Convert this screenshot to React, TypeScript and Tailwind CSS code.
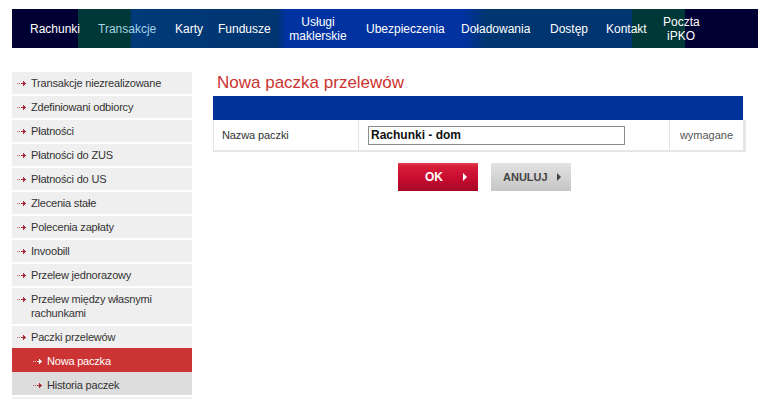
import React from "react";

const Arrow = ({ color = "#a8283c" }: { color?: string }) => (
  <svg width="9" height="5" viewBox="0 0 9 5" className="shrink-0">
    <rect x="0" y="2" width="1" height="1" fill={color} opacity="0.6" />
    <rect x="2" y="2" width="1" height="1" fill={color} opacity="0.8" />
    <rect x="4" y="2" width="5" height="1" fill={color} />
    <rect x="6" y="0" width="1" height="5" fill={color} />
    <rect x="7" y="1" width="1" height="3" fill={color} />
  </svg>
);

type Item = { label: string; sub?: boolean; active?: boolean; dark?: boolean; gap?: boolean };

const items: Item[] = [
  { label: "Transakcje niezrealizowane", gap: true },
  { label: "Zdefiniowani odbiorcy", gap: true },
  { label: "Płatności", gap: true },
  { label: "Płatności do ZUS", gap: true },
  { label: "Płatności do US", gap: true },
  { label: "Zlecenia stałe", gap: true },
  { label: "Polecenia zapłaty", gap: true },
  { label: "Invoobill", gap: true },
  { label: "Przelew jednorazowy", gap: true },
  { label: "Przelew między własnymi rachunkami", gap: true },
  { label: "Paczki przelewów" },
  { label: "Nowa paczka", sub: true, active: true },
  { label: "Historia paczek", sub: true, dark: true, gap: true },
];

export default function App() {
  const navFont = { fontFamily: '"Liberation Sans", Arial, sans-serif' };
  return (
    <div className="min-h-[399px] bg-white pt-[9px] text-[#333]" style={navFont}>
      <div className="ml-[12px] flex h-[39px] items-center text-[12px] leading-[14px] text-white bg-[linear-gradient(to_right,#000033_0px,#000033_66px,#003838_66px,#003838_119px,#003a78_119px,#003570_265px,#0033a0_274px,#0033a0_452px,#003570_474px,#003570_620px,#003838_620px,#003838_673px,#000033_673px)]">
        <div className="ml-[18px] w-[68px]">Rachunki</div>
        <div className="w-[77px] text-[#a4d4e6]">Transakcje</div>
        <div className="w-[43px]">Karty</div>
        <div className="w-[70px]">Fundusze</div>
        <div className="w-[78px]">
          <div className="w-[60px] text-center">Usługi<br />maklerskie</div>
        </div>
        <div className="w-[95px]">Ubezpieczenia</div>
        <div className="w-[89px]">Doładowania</div>
        <div className="w-[56px]">Dostęp</div>
        <div className="w-[57px]">Kontakt</div>
        <div className="w-[36px] text-center">Poczta<br />iPKO</div>
      </div>

      <div className="flex">
        <div className="ml-[12px] mt-[24px] w-[180px] text-[11px] leading-[14px] tracking-[-0.2px]">
          {items.map((it) => (
            <div
              key={it.label}
              className={
                "flex items-start gap-[5px] " +
                (it.sub ? "pl-[21px] " : "pl-[5px] ") +
                (it.active
                  ? "bg-[#cc3333] text-white pt-[6px] pb-[4px] "
                  : it.dark
                  ? "bg-[#dddddd] pt-[6px] pb-[3px] "
                  : "bg-[#efefef] py-[4px] ") +
                (it.gap ? "mb-[2px]" : "")
              }
            >
              <span className="mt-[5px]">
                <Arrow color={it.active ? "#ffffff" : "#a8283c"} />
              </span>
              <span className="pr-[4px]">{it.label}</span>
            </div>
          ))}
          <div className="h-[22px] bg-[#efefef]" />
        </div>

        <div className="ml-[21px] mt-[25px] w-[533px]">
          <div className="pl-[4px] text-[17px] leading-[20px] text-[#cc3333]">Nowa paczka przelewów</div>
          <div className="mt-[3px] h-[24px] w-[530px] bg-[#00339a]" />
          <div className="flex h-[32px] w-[533px] border-b-[2px] border-l border-r-[3px] border-[#e6e6e6] bg-white text-[11px]">
            <div className="flex w-[145px] items-center border-r border-[#e2e2e2] pl-[8px] tracking-[-0.1px] text-[#333]">
              Nazwa paczki
            </div>
            <div className="flex w-[311px] items-center border-r border-[#e2e2e2] pl-[9px]">
              <div className="flex h-[19px] w-[257px] items-center border border-[#8c8c8c] pl-[2px] text-[12px] font-bold text-[#111]">
                Rachunki - dom
              </div>
            </div>
            <div className="flex flex-1 items-center justify-center text-[#555]">wymagane</div>
          </div>

          <div className="mt-[11px] flex gap-[13px] pl-[185px]">
            <div className="flex h-[28px] w-[80px] items-center bg-[linear-gradient(to_bottom,#e04050_0%,#d41c3a_14%,#c80c30_55%,#a60826_100%)] pl-[27px] text-[12px] font-bold text-white">
              <span>OK</span>
              <span className="ml-[20px] h-0 w-0 border-y-[4px] border-l-[4px] border-y-transparent border-l-white" />
            </div>
            <div className="flex h-[28px] w-[80px] items-center bg-[linear-gradient(to_bottom,#e2e2e2,#c6c6c6)] pl-[12px] text-[11px] font-bold text-[#444]">
              <span>ANULUJ</span>
              <span className="ml-[9px] h-0 w-0 border-y-[4px] border-l-[4px] border-y-transparent border-l-[#444]" />
            </div>
          </div>
        </div>
      </div>
    </div>
  );
}
